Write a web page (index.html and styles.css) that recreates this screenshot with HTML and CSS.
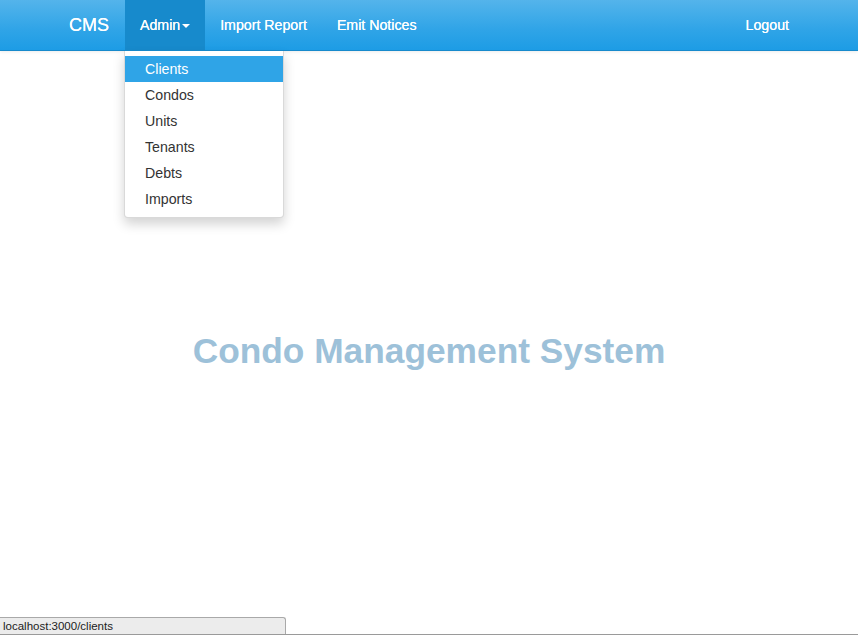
FILE: index.html
```html
<!DOCTYPE html>
<html>
<head>
<meta charset="utf-8">
<link rel="stylesheet" href="styles.css">
</head>
<body>
<nav class="navbar">
  <div class="container">
    <a class="brand" href="#">CMS</a>
    <ul class="nav">
      <li class="dropdown open">
        <a class="active" href="#">Admin <span class="caret"></span></a>
        <ul class="menu">
          <li><a class="hl" href="#">Clients</a></li>
          <li><a href="#">Condos</a></li>
          <li><a href="#">Units</a></li>
          <li><a href="#">Tenants</a></li>
          <li><a href="#">Debts</a></li>
          <li><a href="#">Imports</a></li>
        </ul>
      </li>
      <li><a href="#">Import Report</a></li>
      <li><a href="#">Emit Notices</a></li>
    </ul>
    <ul class="nav nav-right">
      <li><a href="#">Logout</a></li>
    </ul>
  </div>
</nav>
<main class="main">
  <h1 class="title">Condo Management System</h1>
</main>
<div class="status">localhost:3000/clients</div>
</body>
</html>
```
FILE: styles.css
```css
html, body { margin: 0; padding: 0; }
body {
  font-family: "Liberation Sans", Arial, sans-serif;
  font-size: 14px;
  line-height: 20px;
  color: #333;
  background: #fff;
  height: 635px;
  overflow: hidden;
}
a { text-decoration: none; }
ul { list-style: none; margin: 0; padding: 0; }

.navbar {
  height: 50px;
  background-image: linear-gradient(#54b4eb, #2fa4e7 60%, #1d9ce5);
  border-bottom: 1px solid #178acc;
  box-shadow: 0 1px 3px rgba(0,0,0,0.08);
  position: relative;
  z-index: 10;
}
.container {
  width: 750px;
  margin: 0 auto;
  display: flex;
  height: 50px;
}
.brand {
  display: block;
  padding: 15px 16px 15px 15px;
  font-size: 18px;
  line-height: 20px;
  color: #fff;
  height: 20px;
  text-shadow: 0 0 0.4px #fff;
}
.nav { display: flex; }
.nav > li { position: relative; }
.nav > li > a {
  display: block;
  padding: 15px 15px;
  font-size: 14.2px;
  line-height: 20px;
  color: #fff;
  text-shadow: 0 0 0.4px #fff;
}
.nav > li > a.active { background: #178acc; }
.nav-right { margin-left: auto; margin-right: 0; }
.caret {
  display: inline-block;
  width: 0; height: 0;
  margin-left: -2px;
  vertical-align: middle;
  border-top: 4px solid #fff;
  border-left: 4px solid transparent;
  border-right: 4px solid transparent;
}
.menu {
  position: absolute;
  top: 51px;
  left: -1px;
  min-width: 160px;
  padding: 5px 0;
  background: #fff;
  border: 1px solid rgba(0,0,0,0.15);
  border-top: 0;
  border-radius: 0 0 4px 4px;
  box-shadow: 0 6px 12px rgba(0,0,0,0.175);
  box-sizing: border-box;
}
.menu a {
  display: block;
  padding: 3px 20px;
  line-height: 20px;
  font-size: 14.2px;
  color: #333;
  white-space: nowrap;
}
.menu a.hl { background: #2fa4e7; color: #fff; }

.main {
  display: flex;
  justify-content: center;
  padding-top: 280px;
}
.title {
  margin: 0;
  font-size: 35.3px;
  line-height: 40px;
  font-weight: bold;
  color: #9dc1d9;
}

.status {
  position: fixed;
  left: 0;
  bottom: 1px;
  width: 282px;
  height: 16px;
  padding-left: 3px;
  box-sizing: content-box;
  font-size: 11.5px;
  line-height: 16px;
  color: #222;
  background: #ececec;
  border: 1px solid #a9a9a9;
  border-left: 0;
  border-bottom: 0;
  border-radius: 0 3px 0 0;
}
body::after {
  content: "";
  position: fixed;
  left: 0; right: 0; bottom: 0;
  height: 1px;
  background: #9a9a9a;
}
```
